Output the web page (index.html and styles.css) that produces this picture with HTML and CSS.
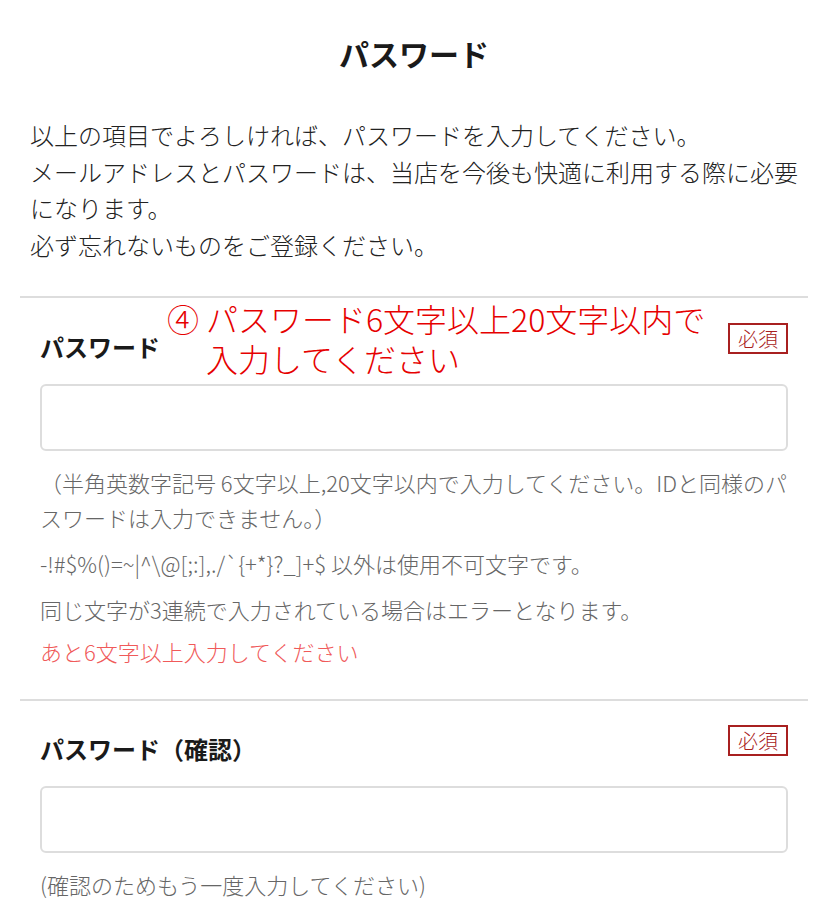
FILE: index.html
```html
<!DOCTYPE html>
<html lang="ja">
<head>
<meta charset="utf-8">
<title>パスワード</title>
<link rel="stylesheet" href="styles.css">
</head>
<body>
<div class="page">
  <h1 class="title">パスワード</h1>
  <div class="intro">
    <p>以上の項目でよろしければ、パスワードを入力してください。</p>
    <p>メールアドレスとパスワードは、当店を今後も快適に利用する際に必要になります。</p>
    <p>必ず忘れないものをご登録ください。</p>
  </div>

  <section class="field">
    <div class="field-head">
      <span class="label">パスワード</span>
      <span class="badge">必須</span>
      <div class="note"><span class="note-num">④</span><span class="note-text">パスワード6文字以上20文字以内で<br>入力してください</span></div>
    </div>
    <div class="input"></div>
    <p class="help first">（半角英数字記号 6文字以上,20文字以内で入力してください。IDと同様のパスワードは入力できません。）</p>
    <p class="help">-!#$%()=~|^\@[;:],./`{+*}?_]+$ 以外は使用不可文字です。</p>
    <p class="help">同じ文字が3連続で入力されている場合はエラーとなります。</p>
    <p class="error">あと6文字以上入力してください</p>
  </section>

  <section class="field">
    <div class="field-head">
      <span class="label">パスワード（確認）</span>
      <span class="badge">必須</span>
    </div>
    <div class="input"></div>
    <p class="help first">(確認のためもう一度入力してください)</p>
  </section>
</div>
</body>
</html>
```

FILE: styles.css
```css
html, body {
  margin: 0;
  padding: 0;
  background: #fff;
}
body {
  font-family: "Noto Sans CJK JP", "Noto Sans", sans-serif;
  color: #222;
}
.page {
  padding: 0 20px;
}
.title {
  margin: 0;
  padding-top: 31px;
  font-size: 30px;
  line-height: 45px;
  font-weight: 700;
  text-align: center;
  color: #1a1a1a;
}
.intro {
  padding: 0 10px;
  margin: 41px 0 33px;
  font-size: 24px;
  line-height: 36.5px;
  font-weight: 300;
  color: #222;
}
.intro p {
  margin: 0;
}
.field {
  border-top: 2px solid #ddd;
  padding: 25px 20px 30px;
}
.field + .field {
  padding-top: 24px;
}
.field-head {
  position: relative;
  display: flex;
  justify-content: space-between;
  align-items: flex-start;
}
.label {
  margin-top: 6px;
  font-size: 24px;
  line-height: 36px;
  font-weight: 700;
  color: #1a1a1a;
}
.badge {
  box-sizing: border-box;
  width: 60px;
  height: 31px;
  border: 2px solid #a82020;
  color: #a82020;
  font-size: 20px;
  line-height: 27px;
  font-weight: 300;
  text-align: center;
}
.note {
  position: absolute;
  left: 127px;
  top: -25px;
  display: flex;
  color: #e60000;
  font-size: 32px;
  line-height: 40px;
  font-weight: 300;
}
.note-num {
  width: 39px;
}
.input {
  box-sizing: border-box;
  margin-top: 19px;
  height: 67px;
  border: 2px solid #ddd;
  border-radius: 6px;
  background: #fff;
}
.help {
  margin: 11px -8px 0 0;
  font-size: 22px;
  line-height: 35px;
  font-weight: 300;
  color: #666;
}
.help.first {
  margin-top: 14px;
}
.error {
  margin: 7px 0 0;
  font-size: 22px;
  line-height: 35px;
  font-weight: 300;
  color: #f05a5a;
}
```
